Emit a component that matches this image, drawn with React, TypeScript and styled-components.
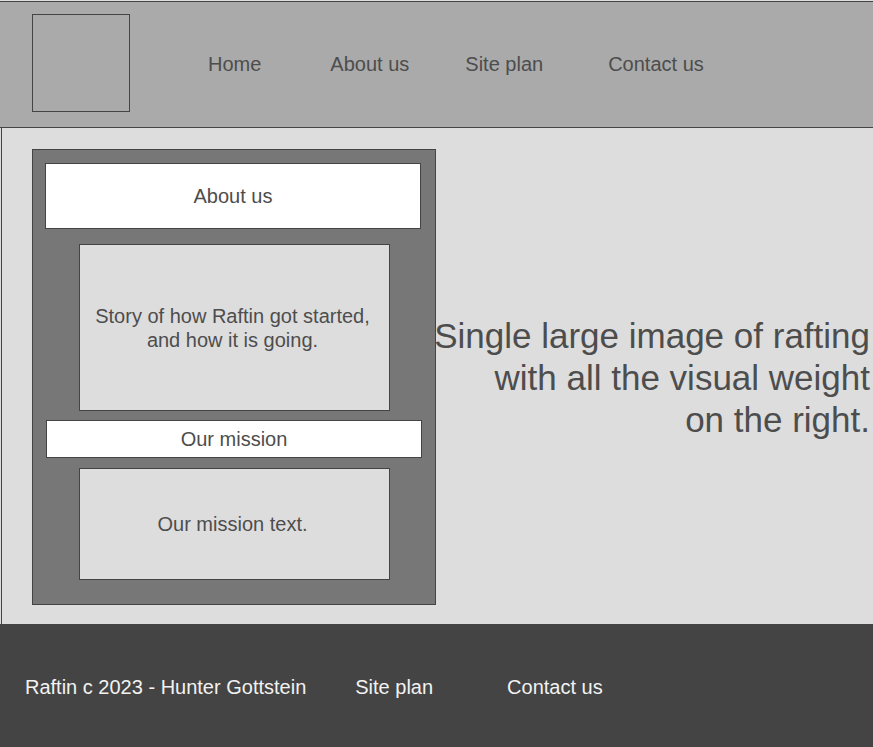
import React from "react";
import styled, { createGlobalStyle } from "styled-components";

const Global = createGlobalStyle`
  html, body {
    margin: 0;
    padding: 0;
    background: #dddddd;
    font-family: "Liberation Sans", Arial, sans-serif;
    color: #4d4d4d;
  }
  * { box-sizing: border-box; }
`;

const Page = styled.div`
  display: flex;
  flex-direction: column;
  width: 873px;
  overflow: hidden;
`;

const Header = styled.header`
  margin-top: 1px;
  height: 127px;
  display: flex;
  align-items: center;
  padding-left: 32px;
  background: #aaaaaa;
  border-top: 1px solid #444444;
  border-bottom: 1px solid #444444;
`;

const Logo = styled.div`
  width: 98px;
  height: 98px;
  margin-top: -3px;
  border: 1px solid #444444;
`;

const Nav = styled.nav`
  display: flex;
  align-items: center;
  margin-top: -2px;
`;

const NavLink = styled.span<{ $offset: number }>`
  margin-left: ${(p) => p.$offset}px;
  font-size: 20px;
  line-height: 24px;
  color: #4d4d4d;
`;

const Main = styled.main`
  height: 496px;
  display: flex;
  align-items: center;
  padding: 21px 3px 19px 30px;
  margin-left: 1px;
  border-left: 1px solid #444444;
  background: #dddddd;
`;

const Sidebar = styled.aside`
  flex: none;
  width: 404px;
  height: 456px;
  display: flex;
  flex-direction: column;
  align-items: flex-start;
  padding-top: 13px;
  background: #777777;
  border: 1px solid #444444;
`;

const SectionTitle = styled.div<{ $height: number; $left: number; $top: number }>`
  width: 376px;
  height: ${(p) => p.$height}px;
  margin-left: ${(p) => p.$left}px;
  margin-top: ${(p) => p.$top}px;
  display: flex;
  align-items: center;
  justify-content: center;
  padding-bottom: 1px;
  background: #ffffff;
  border: 1px solid #444444;
  font-size: 20px;
  line-height: 24px;
  color: #4d4d4d;
`;

const TextBox = styled.div<{ $height: number; $top: number }>`
  width: 311px;
  height: ${(p) => p.$height}px;
  margin-left: 46px;
  margin-top: ${(p) => p.$top}px;
  display: flex;
  align-items: center;
  justify-content: center;
  text-align: center;
  padding-right: 4px;
  background: #dddddd;
  border: 1px solid #444444;
  font-size: 20px;
  line-height: 24px;
  color: #4d4d4d;
`;

const Hero = styled.div`
  flex: 1;
  min-width: 0;
  display: flex;
  justify-content: flex-end;
`;

const HeroText = styled.p`
  margin: 2px 0 0;
  white-space: nowrap;
  text-align: right;
  font-size: 35px;
  line-height: 42px;
  color: #4d4d4d;
`;

const Footer = styled.footer`
  height: 123px;
  display: flex;
  align-items: center;
  padding-left: 25px;
  padding-top: 2px;
  background: #444444;
`;

const FooterLink = styled.span<{ $offset: number }>`
  margin-left: ${(p) => p.$offset}px;
  font-size: 20px;
  line-height: 24px;
  color: #f2f2f2;
`;

export default function App() {
  return (
    <>
      <Global />
      <Page>
        <Header>
          <Logo />
          <Nav>
            <NavLink $offset={78}>Home</NavLink>
            <NavLink $offset={69}>About us</NavLink>
            <NavLink $offset={56}>Site plan</NavLink>
            <NavLink $offset={65}>Contact us</NavLink>
          </Nav>
        </Header>
        <Main>
          <Sidebar>
            <SectionTitle $height={66} $left={12} $top={0}>
              About us
            </SectionTitle>
            <TextBox $height={167} $top={15}>
              Story of how Raftin got started,
              <br />
              and how it is going.
            </TextBox>
            <SectionTitle $height={38} $left={13} $top={9}>
              Our mission
            </SectionTitle>
            <TextBox $height={112} $top={10}>
              Our mission text.
            </TextBox>
          </Sidebar>
          <Hero>
            <HeroText>
              Single large image of rafting
              <br />
              with all the visual weight
              <br />
              on the right.
            </HeroText>
          </Hero>
        </Main>
        <Footer>
          <FooterLink $offset={0}>Raftin c 2023 - Hunter Gottstein</FooterLink>
          <FooterLink $offset={49}>Site plan</FooterLink>
          <FooterLink $offset={74}>Contact us</FooterLink>
        </Footer>
      </Page>
    </>
  );
}
